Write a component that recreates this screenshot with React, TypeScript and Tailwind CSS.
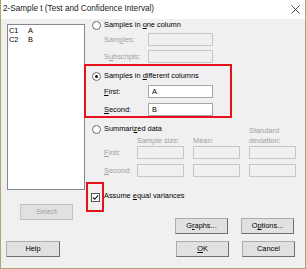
import type { ReactNode } from 'react';

function U({ children }: { children: ReactNode }) {
  return <span className="underline underline-offset-[1px]">{children}</span>;
}

function Radio({ checked = false }: { checked?: boolean }) {
  return (
    <span className="w-[9px] h-[9px] shrink-0 rounded-full border border-[#6d6d6d] bg-white flex items-center justify-center">
      {checked && <span className="w-[3px] h-[3px] rounded-full bg-[#1a1a1a]" />}
    </span>
  );
}

function Field({ value, disabled = false, w = 'w-[65px]' }: { value?: string; disabled?: boolean; w?: string }) {
  return (
    <div
      className={`${w} h-[13px] flex items-center pl-[3px] border ${
        disabled ? 'border-[#c6c6c6] bg-[#f0f0f0]' : 'border-[#a4a7ad] bg-white text-black'
      }`}
    >
      {value}
    </div>
  );
}

function Btn({ children, disabled = false, w = 'w-[53px]' }: { children: ReactNode; disabled?: boolean; w?: string }) {
  return (
    <button
      className={`${w} h-[16px] flex items-center justify-center bg-[#e1e1e1] border ${
        disabled
          ? 'border-[#c4c4c4] text-[#a0a0a0]'
          : 'border-[#adadad] border-r-[#6f6f6f] border-b-[#6f6f6f] text-black'
      }`}
    >
      {children}
    </button>
  );
}

export default function App() {
  return (
    <div className="w-[306px] h-[269px] flex flex-col border-x border-b border-[#b3a276] bg-[#f0f0f0] font-['Liberation_Sans',Arial,sans-serif] text-[7.4px] text-black leading-none">
      {/* Title bar */}
      <div className="h-[19px] bg-white flex items-center justify-between pl-[2px] pr-[5px] text-[8.2px] text-[#1b1b1b]">
        <span>2-Sample t (Test and Confidence Interval)</span>
        <svg width="9" height="9" viewBox="0 0 9 9" className="text-[#333]">
          <path d="M0.5 0.5L8.5 8.5M8.5 0.5L0.5 8.5" stroke="currentColor" strokeWidth="0.9" />
        </svg>
      </div>

      {/* Body */}
      <div className="flex">
        {/* Left column: variables list */}
        <div className="w-[84px] pl-[6px] pt-[5px] flex flex-col">
          <div className="w-[78px] h-[166px] bg-white border border-[#828790] pl-[1px] pt-[1px] leading-[9px]">
            <div className="flex">
              <span className="w-[19px]">C1</span>
              <span>A</span>
            </div>
            <div className="flex">
              <span className="w-[19px]">C2</span>
              <span>B</span>
            </div>
          </div>
          <div className="mt-[14px] ml-[13px]">
            <Btn disabled>Select</Btn>
          </div>
        </div>

        {/* Right column */}
        <div className="w-[219px] flex flex-col">
          <div className="h-[12px] flex items-center gap-[3px] pl-[7px]">
            <Radio />
            <span>
              Samples in <U>o</U>ne column
            </span>
          </div>
          <div className="mt-[2px] flex items-center pl-[19px] text-[#a0a0a0]">
            <span className="w-[44px]">
              Sam<U>p</U>les:
            </span>
            <Field disabled />
          </div>
          <div className="mt-[4px] flex items-center pl-[19px] text-[#a0a0a0]">
            <span className="w-[44px]">
              S<U>u</U>bscripts:
            </span>
            <Field disabled />
          </div>

          {/* Highlighted: samples in different columns */}
          <div className="mt-[1px] -ml-[1px] w-[148px] h-[54px] border-2 border-[#e5121c] flex flex-col pl-[6px] pt-[4px]">
            <div className="h-[12px] flex items-center gap-[3px]">
              <Radio checked />
              <span>
                Samples in <U>d</U>ifferent columns
              </span>
            </div>
            <div className="mt-[3px] flex items-center pl-[12px]">
              <span className="w-[44px]">
                <U>F</U>irst:
              </span>
              <Field value="A" />
            </div>
            <div className="mt-[5px] flex items-center pl-[12px]">
              <span className="w-[44px]">
                <U>S</U>econd:
              </span>
              <Field value="B" />
            </div>
          </div>

          <div className="mt-[5px] h-[12px] flex items-center gap-[3px] pl-[7px]">
            <Radio />
            <span>
              Summari<U>z</U>ed data
            </span>
          </div>
          <div className="-mt-[9px] pl-[19px] grid grid-cols-[24px_47px_47px_47px] gap-x-[9px] text-[#a0a0a0]">
            <span />
            <span className="self-end leading-[10px]">Sample size:</span>
            <span className="self-end leading-[10px]">Mean:</span>
            <span className="leading-[10px]">
              Standard
              <br />
              deviation:
            </span>
            <span className="self-center">
              <U>F</U>irst:
            </span>
            <Field disabled w="w-[47px]" />
            <Field disabled w="w-[47px]" />
            <Field disabled w="w-[47px]" />
            <span className="mt-[5px] self-center">
              <U>S</U>econd:
            </span>
            <div className="mt-[5px]">
              <Field disabled w="w-[47px]" />
            </div>
            <div className="mt-[5px]">
              <Field disabled w="w-[47px]" />
            </div>
            <div className="mt-[5px]">
              <Field disabled w="w-[47px]" />
            </div>
          </div>

          {/* Assume equal variances */}
          <div className="mt-[5px] ml-[1px] flex items-center">
            <div className="w-[18px] h-[30px] border-2 border-[#e5121c] flex items-center justify-center">
              <span className="w-[9px] h-[9px] border border-[#555] bg-white flex items-center justify-center">
                <svg width="7" height="7" viewBox="0 0 7 7">
                  <path d="M1 3.5L2.8 5.3L6 1.3" fill="none" stroke="#111" strokeWidth="1.1" />
                </svg>
              </span>
            </div>
            <span className="-mt-[2px]">
              Assume <U>e</U>qual variances
            </span>
          </div>

          <div className="mt-[6px] flex justify-end gap-[13px] pr-[10px]">
            <Btn>
              G<U>r</U>aphs...
            </Btn>
            <Btn>
              O<U>p</U>tions...
            </Btn>
          </div>
        </div>
      </div>

      {/* Bottom buttons */}
      <div className="mt-[7px] flex items-center pl-[5px] pr-[10px]">
        <Btn w="w-[54px]">Help</Btn>
        <div className="flex-1" />
        <div className="flex gap-[13px]">
          <Btn>
            <U>O</U>K
          </Btn>
          <Btn>Cancel</Btn>
        </div>
      </div>
    </div>
  );
}
